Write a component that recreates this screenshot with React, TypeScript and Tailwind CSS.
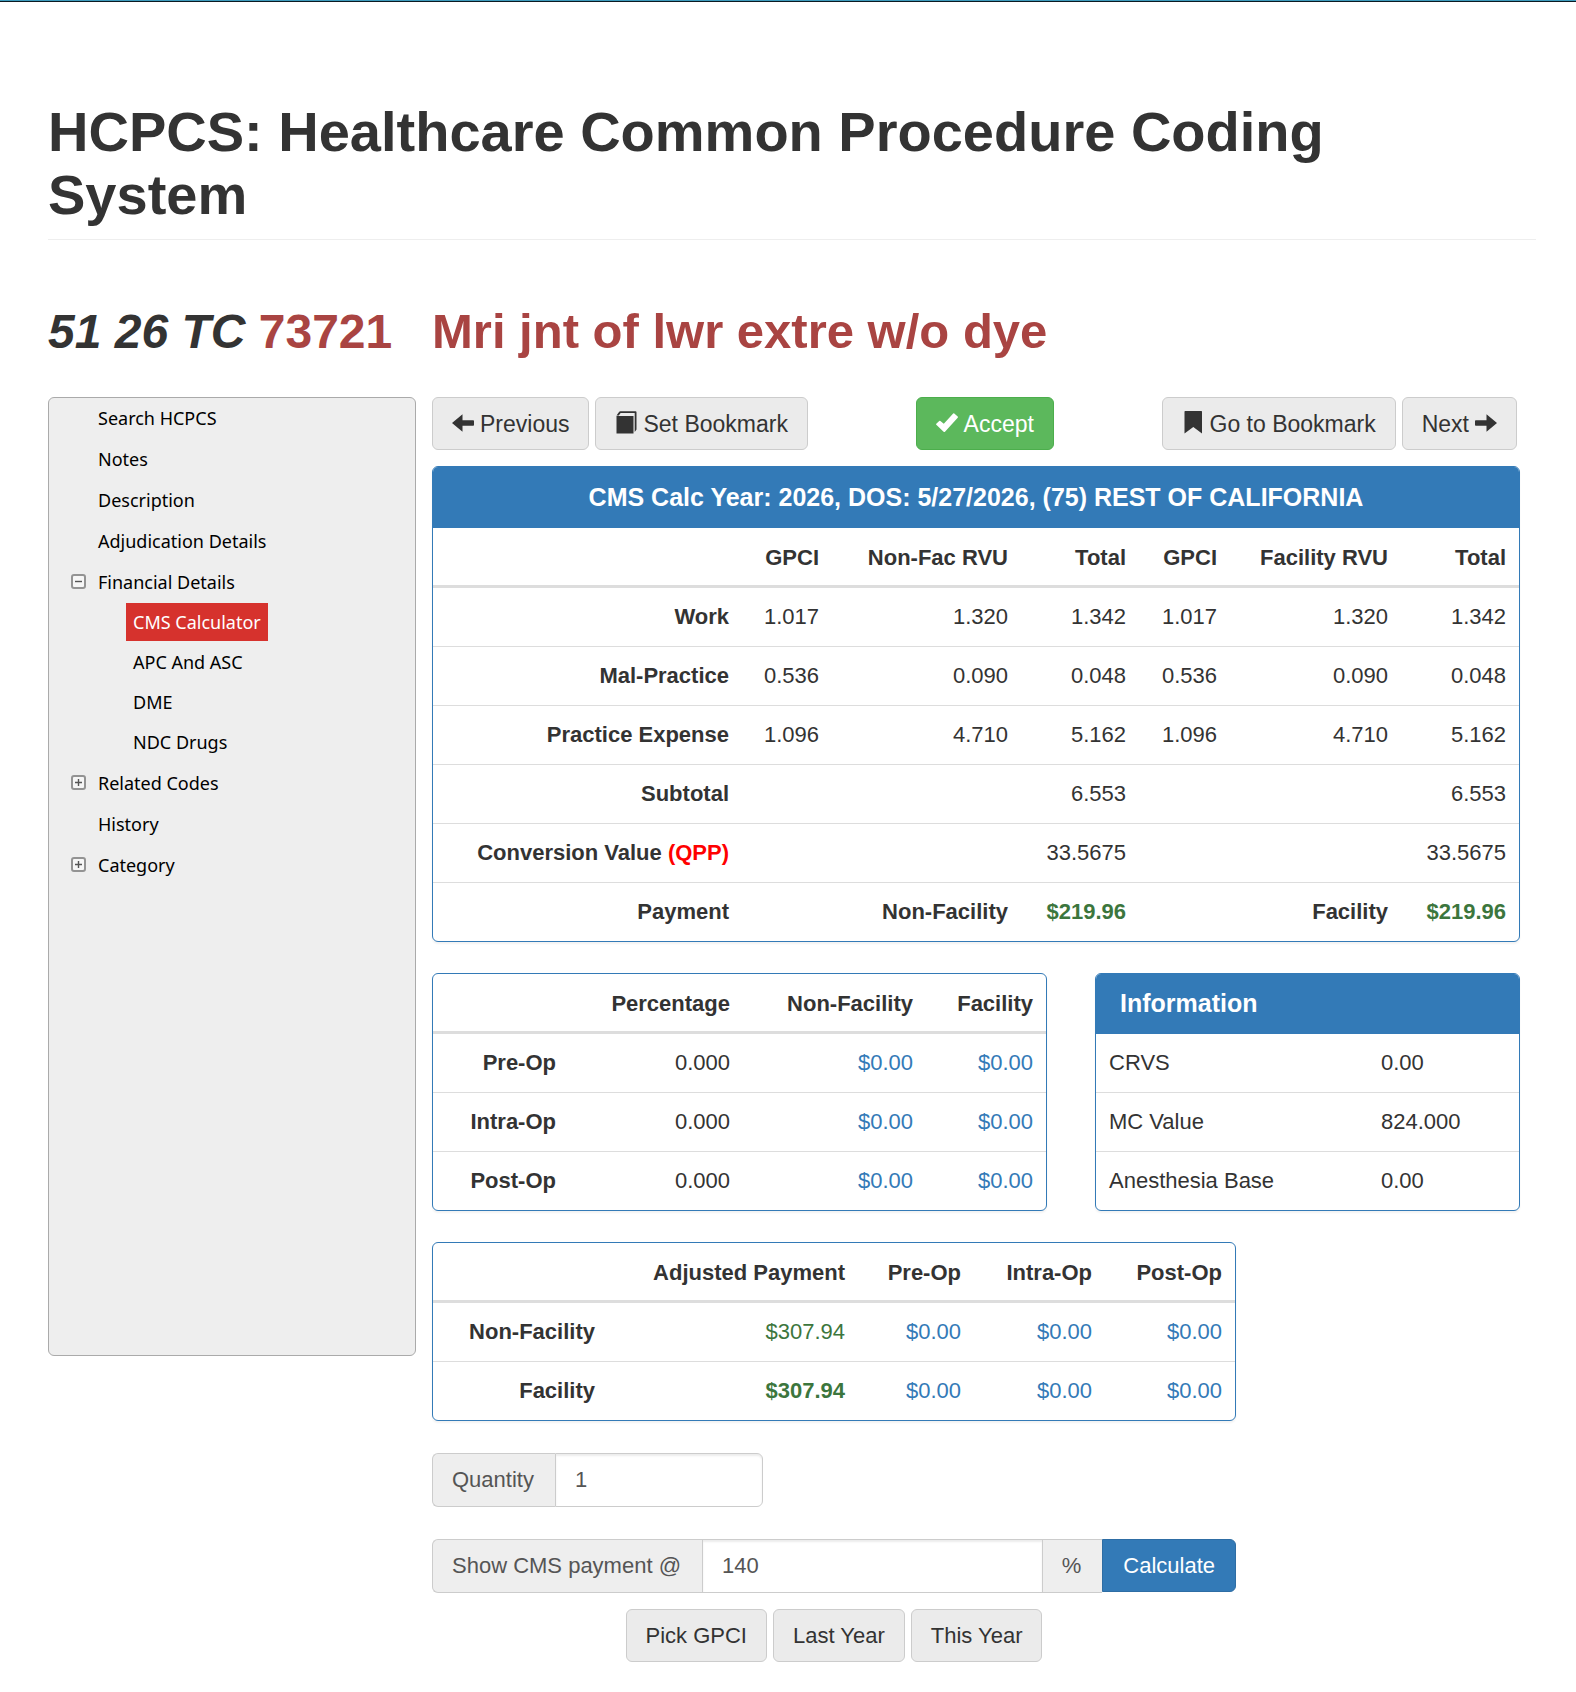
import React, { useState } from 'react';

interface NavItem {
  label: string;
  state?: 'open' | 'closed';
  children?: string[];
}

const navItems: NavItem[] = [
  { label: 'Search HCPCS' },
  { label: 'Notes' },
  { label: 'Description' },
  { label: 'Adjudication Details' },
  {
    label: 'Financial Details',
    state: 'open',
    children: ['CMS Calculator', 'APC And ASC', 'DME', 'NDC Drugs'],
  },
  { label: 'Related Codes', state: 'closed' },
  { label: 'History' },
  { label: 'Category', state: 'closed' },
];

const rvuRows = [
  { label: 'Work', gpci: '1.017', rvu: '1.320', total: '1.342' },
  { label: 'Mal-Practice', gpci: '0.536', rvu: '0.090', total: '0.048' },
  { label: 'Practice Expense', gpci: '1.096', rvu: '4.710', total: '5.162' },
  { label: 'Subtotal', gpci: '', rvu: '', total: '6.553' },
];

const opRows = ['Pre-Op', 'Intra-Op', 'Post-Op'];

const infoRows = [
  ['CRVS', '0.00'],
  ['MC Value', '824.000'],
  ['Anesthesia Base', '0.00'],
];

const headCell = 'h-[60px] border-b-3 border-[#ddd] px-[13px] pt-0.5 font-bold';
const cell = 'h-[59px] border-t border-[#ddd] px-[13px]';
const firstCell = 'h-[58px] px-[13px]';
const panelTitle = 'flex items-center bg-[#337ab7] pb-0.5 text-[25px] font-bold text-white';
const addon = 'flex items-center border border-[#ccc] bg-[#eee] pr-[21px] pl-[19px] text-[#555]';
const input = 'min-w-0 border border-[#ccc] bg-white px-[19px] text-[#555] shadow-[inset_0_2px_2px_rgba(0,0,0,0.075)] outline-none';

const ToggleIcon = ({ open }: { open: boolean }) => (
  <svg viewBox="0 0 15 15" className="h-[15px] w-[15px]">
    <rect x="1" y="1" width="13" height="13" rx="2" fill="#f6f6f6" stroke="#939393" strokeWidth="2" />
    <path d={open ? 'M4 7.5h7' : 'M4 7.5h7M7.5 4v7'} stroke="#555" strokeWidth="1.4" />
  </svg>
);

const ArrowIcon = ({ right = false }: { right?: boolean }) => (
  <svg viewBox="0 0 22 24" className="h-6 w-[22px]" fill="currentColor">
    <path
      d={
        right
          ? 'M22 11 11.500 2.200v6H.8a.8.8 0 0 0-.8.8v4a.8.8 0 0 0 .8.8h10.700v6z'
          : 'M0 11l10.500-8.800v6h10.700a.8.8 0 0 1 .8.8v4a.8.8 0 0 1-.8.8H10.500v6z'
      }
    />
  </svg>
);

const BookIcon = () => (
  <svg viewBox="0 0 22 26" className="h-[26px] w-[22px]" fill="currentColor">
    <path d="M1.500 5h17v17.500h-17z" />
    <path d="M1.500 4.600 4.200.8Q4.600.2 5.400.2H20.500q1 0 1 1v17.200l-1.800 2.600V2H5.600L3.800 4.600z" />
  </svg>
);

const CheckIcon = () => (
  <svg viewBox="0 0 22 24" className="h-6 w-[22px]" fill="currentColor">
    <path d="M.3 11.700 3.200 8.900q.6-.5 1.200 0l3.400 2.900L17.200 1.600q.5-.5 1.100 0l3.400 3q.5.500 0 1.100L9 19.700q-.7.700-1.400 0L.3 12.700q-.5-.5 0-1z" />
  </svg>
);

const BookmarkIcon = () => (
  <svg viewBox="0 0 22 26" className="h-[26px] w-[22px]" fill="currentColor">
    <path d="M2.500.7q0-.6.6-.6H19.400q.6 0 .6.600V22.500l-8.700-6.500-8.800 6.500z" />
  </svg>
);

const Button = ({ children, success = false }: { children: React.ReactNode; success?: boolean }) => (
  <button
    type="button"
    className={
      success
        ? 'flex h-[53px] items-center gap-1.5 rounded-md border border-[#4cae4c] bg-[#5cb85c] px-[19px] text-white'
        : 'flex h-[53px] items-center gap-1.5 rounded-md border border-[#ccc] bg-[#ebebeb] px-[19px] text-[#333]'
    }
  >
    {children}
  </button>
);

const Panel = ({ children, className = '' }: { children: React.ReactNode; className?: string }) => (
  <div className={`overflow-hidden rounded-md border border-[#337ab7] bg-white shadow-[0_2px_2px_rgba(0,0,0,0.05)] ${className}`}>
    {children}
  </div>
);

const Sidebar = () => (
  <nav className="min-h-[959px] w-[368px] shrink-0 self-start rounded-md border border-[#aaa] bg-[#eee] font-['Noto_Sans',sans-serif] text-[18px] text-black">
    <ul>
      {navItems.map((item) => (
        <li key={item.label}>
          <div className="flex h-[41px] items-center pb-0.5 pl-[22px]">
            <span className="w-[27px]">{item.state && <ToggleIcon open={item.state === 'open'} />}</span>
            <a href="#">{item.label}</a>
          </div>
          {item.children && (
            <ul className="pl-[77px]">
              {item.children.map((child) => (
                <li key={child} className="flex h-10">
                  <a
                    href="#"
                    className={
                      child === 'CMS Calculator'
                        ? 'flex h-[38px] items-center bg-[#d6322d] px-[7px] text-white'
                        : 'flex h-[38px] items-center px-[7px]'
                    }
                  >
                    {child}
                  </a>
                </li>
              ))}
            </ul>
          )}
        </li>
      ))}
    </ul>
  </nav>
);

const RvuTable = () => (
  <Panel>
    <h3 className={`${panelTitle} h-[61px] justify-center`}>
      CMS Calc Year: 2026, DOS: 5/27/2026, (75) REST OF CALIFORNIA
    </h3>
    <table className="w-full table-fixed border-separate border-spacing-0 text-right">
      <colgroup>
        <col />
        <col className="w-[90px]" />
        <col className="w-[189px]" />
        <col className="w-[118px]" />
        <col className="w-[91px]" />
        <col className="w-[171px]" />
        <col className="w-[118px]" />
      </colgroup>
      <thead>
        <tr>
          <th className={headCell}></th>
          <th className={headCell}>GPCI</th>
          <th className={headCell}>Non-Fac RVU</th>
          <th className={headCell}>Total</th>
          <th className={headCell}>GPCI</th>
          <th className={headCell}>Facility RVU</th>
          <th className={headCell}>Total</th>
        </tr>
      </thead>
      <tbody>
        {rvuRows.map((row, i) => {
          const c = i === 0 ? firstCell : cell;
          return (
            <tr key={row.label}>
              <th className={c}>{row.label}</th>
              <td className={c}>{row.gpci}</td>
              <td className={c}>{row.rvu}</td>
              <td className={c}>{row.total}</td>
              <td className={c}>{row.gpci}</td>
              <td className={c}>{row.rvu}</td>
              <td className={c}>{row.total}</td>
            </tr>
          );
        })}
        <tr>
          <th className={cell}>
            Conversion Value <span className="text-[#f00]">(QPP)</span>
          </th>
          <td className={cell} colSpan={2}></td>
          <td className={cell}>33.5675</td>
          <td className={cell} colSpan={2}></td>
          <td className={cell}>33.5675</td>
        </tr>
        <tr className="font-bold">
          <th className={cell}>Payment</th>
          <td className={cell} colSpan={2}>Non-Facility</td>
          <td className={cell}>
            <span className="text-[#3c763d]">$219.96</span>
          </td>
          <td className={cell} colSpan={2}>Facility</td>
          <td className={cell}>
            <span className="text-[#3c763d]">$219.96</span>
          </td>
        </tr>
      </tbody>
    </table>
  </Panel>
);

const OpTable = () => (
  <Panel className="flex-1">
    <table className="w-full table-fixed border-separate border-spacing-0 text-right">
      <colgroup>
        <col />
        <col className="w-[174px]" />
        <col className="w-[183px]" />
        <col className="w-[120px]" />
      </colgroup>
      <thead>
        <tr>
          <th className={headCell}></th>
          <th className={headCell}>Percentage</th>
          <th className={headCell}>Non-Facility</th>
          <th className={headCell}>Facility</th>
        </tr>
      </thead>
      <tbody>
        {opRows.map((label, i) => {
          const c = i === 0 ? firstCell : cell;
          return (
            <tr key={label}>
              <th className={c}>{label}</th>
              <td className={c}>0.000</td>
              <td className={`${c} text-[#337ab7]`}>$0.00</td>
              <td className={`${c} text-[#337ab7]`}>$0.00</td>
            </tr>
          );
        })}
      </tbody>
    </table>
  </Panel>
);

const InfoTable = () => (
  <Panel className="w-[425px]">
    <h3 className={`${panelTitle} h-[60px] px-6`}>Information</h3>
    <table className="w-full table-fixed border-separate border-spacing-0 text-left">
      <colgroup>
        <col />
        <col className="w-[151px]" />
      </colgroup>
      <tbody>
        {infoRows.map(([label, value], i) => {
          const c = i === 0 ? firstCell : cell;
          return (
            <tr key={label}>
              <td className={c}>{label}</td>
              <td className={c}>{value}</td>
            </tr>
          );
        })}
      </tbody>
    </table>
  </Panel>
);

const AdjustedTable = () => (
  <Panel>
    <table className="w-full table-fixed border-separate border-spacing-0 text-right">
      <colgroup>
        <col />
        <col className="w-[250px]" />
        <col className="w-[116px]" />
        <col className="w-[131px]" />
        <col className="w-[130px]" />
      </colgroup>
      <thead>
        <tr>
          <th className={headCell}></th>
          <th className={headCell}>Adjusted Payment</th>
          <th className={headCell}>Pre-Op</th>
          <th className={headCell}>Intra-Op</th>
          <th className={headCell}>Post-Op</th>
        </tr>
      </thead>
      <tbody className="text-[#337ab7]">
        <tr>
          <th className={`${firstCell} text-[#333]`}>Non-Facility</th>
          <td className={`${firstCell} text-[#3c763d]`}>$307.94</td>
          <td className={firstCell}>$0.00</td>
          <td className={firstCell}>$0.00</td>
          <td className={firstCell}>$0.00</td>
        </tr>
        <tr>
          <th className={`${cell} text-[#333]`}>Facility</th>
          <td className={`${cell} font-bold text-[#3c763d]`}>$307.94</td>
          <td className={cell}>$0.00</td>
          <td className={cell}>$0.00</td>
          <td className={cell}>$0.00</td>
        </tr>
      </tbody>
    </table>
  </Panel>
);

const App: React.FC = () => {
  const [quantity, setQuantity] = useState('1');
  const [percent, setPercent] = useState('140');

  return (
    <div className="bg-white font-['Liberation_Sans',Arial,sans-serif] text-[22px] leading-8 text-[#333]">
      <div className="h-[2px] border-b border-[#0b1a22] bg-[#3d9bbd]"></div>
      <div className="pt-[98px] pr-10 pb-6 pl-12">
        <h1 className="border-b border-[#eee] pb-[13px] text-[56px] leading-[63px] font-bold">
          HCPCS: Healthcare Common Procedure Coding System
        </h1>

        <div className="mt-[65px] flex leading-[53px] font-bold text-[#a94442]">
          <h2 className="w-96 shrink-0 text-[48px] whitespace-nowrap">
            <em className="text-[#333]">51 26 TC</em> 73721
          </h2>
          <h2 className="text-[49px]">Mri jnt of lwr extre w/o dye</h2>
        </div>

        <div className="mt-[39px] flex gap-4 pr-4">
          <Sidebar />

          <main className="min-w-0 flex-1">
            <div className="mb-4 flex justify-between pr-[3px] text-[23px]">
              <div className="flex gap-1.5">
                <Button>
                  <ArrowIcon /> Previous
                </Button>
                <Button>
                  <BookIcon /> Set Bookmark
                </Button>
              </div>
              <Button success>
                <CheckIcon /> Accept
              </Button>
              <div className="flex gap-1.5">
                <Button>
                  <BookmarkIcon /> Go to Bookmark
                </Button>
                <Button>
                  Next <ArrowIcon right />
                </Button>
              </div>
            </div>

            <div className="flex flex-col gap-[31px]">
              <RvuTable />
              <div className="flex gap-12">
                <OpTable />
                <InfoTable />
              </div>

              <div className="flex w-[804px] max-w-full flex-col gap-8">
                <AdjustedTable />

                <div className="flex h-[54px] w-[331px]">
                  <label htmlFor="quantity" className={`${addon} rounded-l-md border-r-0`}>
                    Quantity
                  </label>
                  <input
                    id="quantity"
                    className={`${input} flex-1 rounded-r-md`}
                    value={quantity}
                    onChange={(e) => setQuantity(e.target.value)}
                  />
                </div>

                <div>
                  <div className="flex h-[54px]">
                    <label htmlFor="percent" className={`${addon} rounded-l-md border-r-0`}>
                      Show CMS payment @
                    </label>
                    <input
                      id="percent"
                      className={`${input} flex-1`}
                      value={percent}
                      onChange={(e) => setPercent(e.target.value)}
                    />
                    <span className={`${addon} border-x-0`}>%</span>
                    <button
                      type="button"
                      className="h-[53px] rounded-r-md border border-[#2e6da4] bg-[#337ab7] px-5 text-white"
                    >
                      Calculate
                    </button>
                  </div>
                  <div className="mt-4 flex justify-center gap-1.5">
                    <Button>Pick GPCI</Button>
                    <Button>Last Year</Button>
                    <Button>This Year</Button>
                  </div>
                </div>
              </div>
            </div>
          </main>
        </div>
      </div>
    </div>
  );
};

export default App;
